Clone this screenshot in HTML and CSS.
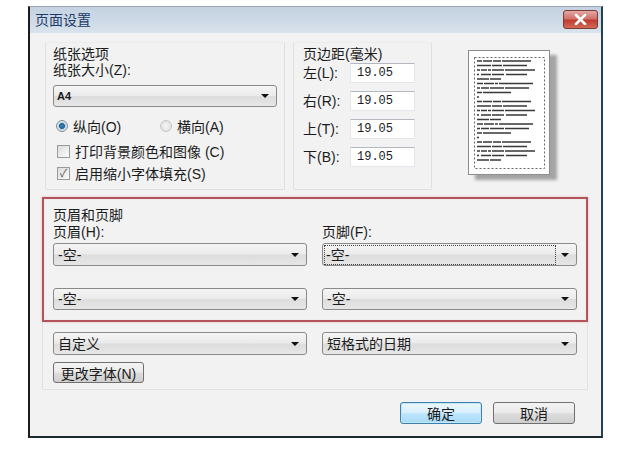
FILE: index.html
```html
<!DOCTYPE html>
<html>
  <head>
    <title>页面设置</title>
    <meta charset="utf-8" />
    <meta name="viewport" content="width=device-width, initial-scale=1" />
    <link rel="stylesheet" href="styles.css">
  </head>
  <body>
    <div class="dialog">
      <div class="titlebar">
        <span class="title">页面设置</span>
        <span class="close">
          <svg width="13" height="11" viewBox="0 0 13 11">
            <path d="M2 1 L11 10 M11 1 L2 10" stroke="#fff" stroke-width="2.6" stroke-linecap="round" />
          </svg>
        </span>
      </div>

      <div class="content">
        <div class="top">
          <div class="group paper">
            <div class="legend">纸张选项</div>
            <div class="label">纸张大小(Z):</div>
            <div class="combo a4"><span class="val">A4</span><i class="arrow"></i></div>
            <div class="radios">
              <span class="opt first"><span class="radio on"></span>纵向(O)</span>
              <span class="opt"><span class="radio"></span>横向(A)</span>
            </div>
            <div class="opt check-row one"><span class="check"></span>打印背景颜色和图像 (C)</div>
            <div class="opt check-row"><span class="check on">✓</span>启用缩小字体填充(S)</div>
          </div>

          <div class="group margins">
            <div class="legend">页边距(毫米)</div>
            <div class="mrow"><span class="mlabel">左(L):</span><span class="field">19.05</span></div>
            <div class="mrow"><span class="mlabel">右(R):</span><span class="field">19.05</span></div>
            <div class="mrow"><span class="mlabel">上(T):</span><span class="field">19.05</span></div>
            <div class="mrow"><span class="mlabel">下(B):</span><span class="field">19.05</span></div>
          </div>

          <div class="preview">
            <svg width="82" height="125" viewBox="0 0 82 125">
              <rect x="6.5" y="7.5" width="70" height="111" fill="none" stroke="#666" stroke-dasharray="2 2" />
              <g stroke="#383838" stroke-width="1.5">
                <line x1="9" y1="11" x2="63" y2="11" stroke-dasharray="5 1 9 1 8 1 60 10" />
                <line x1="9" y1="15.5" x2="59" y2="15.5" stroke-dasharray="14 1 10 1 60 10" />
                <line x1="9" y1="20" x2="67" y2="20" stroke-dasharray="3 1 6 1 3 1 12 1 60 10" />
                <line x1="9" y1="24.5" x2="59" y2="24.5" stroke-dasharray="2 2 10 1 12 2 60 10" />
                <line x1="9" y1="29" x2="33" y2="29" stroke-dasharray="12 1 60 10" />
                <line x1="9" y1="33.5" x2="65" y2="33.5" stroke-dasharray="6 1 10 1 3 1 60 10" />
                <line x1="9" y1="38" x2="61" y2="38" stroke-dasharray="3 1 8 1 14 1 60 10" />
                <line x1="9" y1="42.5" x2="43" y2="42.5" stroke-dasharray="5 1 60 10" />
                <line x1="9" y1="47" x2="11" y2="47" />
                <line x1="9" y1="51.5" x2="63" y2="51.5" stroke-dasharray="5 1 9 1 8 1 60 10" />
                <line x1="9" y1="56" x2="59" y2="56" stroke-dasharray="14 1 10 1 60 10" />
                <line x1="9" y1="60.5" x2="67" y2="60.5" stroke-dasharray="3 1 6 1 3 1 12 1 60 10" />
                <line x1="9" y1="65" x2="59" y2="65" stroke-dasharray="2 2 10 1 12 2 60 10" />
                <line x1="9" y1="69.5" x2="33" y2="69.5" stroke-dasharray="12 1 60 10" />
                <line x1="9" y1="74" x2="65" y2="74" stroke-dasharray="6 1 10 1 3 1 60 10" />
                <line x1="9" y1="78.5" x2="61" y2="78.5" stroke-dasharray="3 1 8 1 14 1 60 10" />
                <line x1="9" y1="83" x2="43" y2="83" stroke-dasharray="5 1 60 10" />
                <line x1="9" y1="87.5" x2="11" y2="87.5" />
                <line x1="9" y1="92" x2="63" y2="92" stroke-dasharray="5 1 9 1 8 1 60 10" />
                <line x1="9" y1="96.5" x2="59" y2="96.5" stroke-dasharray="14 1 10 1 60 10" />
                <line x1="9" y1="101" x2="67" y2="101" stroke-dasharray="3 1 6 1 3 1 12 1 60 10" />
                <line x1="9" y1="105.5" x2="59" y2="105.5" stroke-dasharray="2 2 10 1 12 2 60 10" />
                <line x1="9" y1="110" x2="33" y2="110" stroke-dasharray="12 1 60 10" />
              </g>
            </svg>
          </div>
        </div>

        <div class="hf-group">
          <div class="hf">
            <div class="legend wide">页眉和页脚</div>
            <div class="label">页眉(H):</div>
            <div class="label">页脚(F):</div>
            <div class="combo"><span class="val">-空-</span><i class="arrow"></i></div>
            <div class="combo"><span class="val focus">-空-</span><i class="arrow"></i></div>
            <div class="combo second"><span class="val">-空-</span><i class="arrow"></i></div>
            <div class="combo second"><span class="val">-空-</span><i class="arrow"></i></div>
          </div>
          <div class="hf-row">
            <div class="combo"><span class="val">自定义</span><i class="arrow"></i></div>
            <div class="combo"><span class="val">短格式的日期</span><i class="arrow"></i></div>
          </div>
          <span class="btn font">更改字体(N)</span>
        </div>

        <div class="actions">
          <span class="btn default">确定</span>
          <span class="btn">取消</span>
        </div>
      </div>
    </div>
  </body>
</html>
```

FILE: styles.css
```css
* {
  box-sizing: border-box;
}
html,
body {
  margin: 0;
  background: #fff;
  font-family: "Liberation Sans", "Noto Sans CJK SC", sans-serif;
  font-size: 14px;
  color: #1b1b1b;
}
body {
  padding: 6px 0 0 28px;
}

.dialog {
  width: 575px;
  height: 432px;
  background: #f2f2f2;
  border-top: 1px solid #9aa6b2;
  border-left: 2px solid #1c1c1c;
  border-right: 2px solid #24424f;
  border-bottom: 2px solid #1c2a30;
}

.titlebar {
  height: 26px;
  display: flex;
  justify-content: space-between;
  align-items: flex-start;
  padding-left: 5px;
  background: linear-gradient(to bottom, #c3d2e1, #cfdbe7 60%, #d9e3ed);
}
.title {
  line-height: 26px;
  color: #1d3a68;
}
.close {
  width: 35px;
  height: 19px;
  margin: 3px 3px 0 0;
  display: flex;
  align-items: center;
  justify-content: center;
  border: 1px solid #7a3a36;
  border-radius: 3px;
  background: linear-gradient(to bottom, #e4aaa3, #d0716a 45%, #bf3d30 55%, #d26a57);
}

.content {
  padding: 9px 0 0 12px;
}

/* top row */
.top {
  display: flex;
  align-items: flex-start;
  padding-left: 3px;
}
.group {
  border: 1px solid #e0e0e0;
  border-top-color: #ececec;
  border-radius: 2px;
}
.legend,
.label {
  line-height: 16px;
  white-space: nowrap;
}
.paper {
  width: 240px;
  height: 148px;
  padding: 3px 7px 0 7px;
}
.paper .combo {
  margin-top: 7px;
  height: 22px;
}
.combo.a4 .val {
  font-weight: bold;
  font-size: 11px;
  padding-left: 3px;
}
.radios {
  display: flex;
  margin-top: 9px;
  height: 20px;
  padding-left: 3px;
}
.opt {
  display: flex;
  align-items: center;
  gap: 5px;
  white-space: nowrap;
}
.opt.first {
  width: 104px;
}
.radio {
  width: 12px;
  height: 12px;
  border-radius: 50%;
  border: 1px solid #c6c6c6;
  background: radial-gradient(circle, #f4f4f4, #dcdcdc);
}
.radio.on {
  border-color: #7f8e99;
  background: radial-gradient(circle, #3f90c6 0, #1c5f8e 2.5px, #c7d5df 3.5px, #eef2f5 6px);
}
.check-row {
  height: 20px;
  padding-left: 4px;
  margin-top: 2px;
}
.check-row.one {
  margin-top: 5px;
}
.check {
  width: 13px;
  height: 13px;
  border: 1px solid #9a9a9a;
  background: linear-gradient(135deg, #dcdcdc, #fbfbfb);
  font-size: 11px;
  line-height: 11px;
  text-align: center;
  color: #555;
}

.margins {
  width: 139px;
  height: 148px;
  margin-left: 8px;
  padding: 3px 0 0 9px;
}
.mrow {
  display: flex;
  align-items: flex-start;
  height: 28px;
  padding-top: 1px;
}
.mlabel {
  width: 47px;
  line-height: 20px;
  white-space: nowrap;
}
.field {
  width: 65px;
  height: 20px;
  padding-left: 6px;
  background: #fff;
  border: 1px solid #e2e6ea;
  border-top-color: #b5b9bf;
  font-family: "Liberation Mono", monospace;
  font-size: 12px;
  line-height: 19px;
}

.preview {
  margin: 8px 0 0 36px;
  width: 82px;
  height: 125px;
  background: #fff;
  border: 1px solid #8c8c8c;
  box-shadow: 7px 5px 3px #a4a4a4;
}
.preview svg {
  display: block;
  margin: -1px;
}

/* header / footer */
.hf-group {
  width: 546px;
  margin-top: 7px;
  padding: 0 0 6px 0;
  border: 1px solid #e2e2e2;
  border-top: none;
}
.hf {
  margin: 0 -1px;
  display: grid;
  grid-template-columns: 254px 255px;
  column-gap: 15px;
  padding: 8px 8px 10px 9px;
  border: 2px solid #b3535c;
  box-shadow: 0 0 2px #e7b6b8, inset 0 0 1px #e7b6b8;
}
.legend.wide {
  grid-column: 1 / 3;
  line-height: 17px;
}
.hf .combo {
  margin-top: 3px;
  height: 23px;
}
.hf .combo.second {
  margin-top: 22px;
  height: 22px;
}
.hf-row {
  display: grid;
  grid-template-columns: 254px 255px;
  column-gap: 15px;
  margin: 10px 0 0 10px;
}
.hf-row .combo {
  height: 23px;
}

.combo {
  position: relative;
  display: flex;
  align-items: center;
  border: 1px solid #8a8a8a;
  border-radius: 3px;
  background: linear-gradient(to bottom, #f5f5f5, #ebebeb 48%, #dddddd 52%, #e6e6e6);
}
.val {
  padding-left: 4px;
  line-height: 18px;
  white-space: nowrap;
}
.val.focus {
  margin-left: 2px;
  padding-left: 1px;
  width: 230px;
  outline: 1px dotted #444;
}
.arrow {
  position: absolute;
  right: 7px;
  top: 50%;
  margin-top: -2px;
  border-left: 4px solid transparent;
  border-right: 4px solid transparent;
  border-top: 4px solid #111;
}

.btn {
  display: inline-flex;
  align-items: center;
  justify-content: center;
  width: 82px;
  height: 22px;
  border: 1px solid #707070;
  border-radius: 3px;
  background: linear-gradient(to bottom, #f3f3f3, #ebebeb 48%, #dddddd 52%, #cfcfcf);
  white-space: nowrap;
}
.btn.font {
  width: 91px;
  height: 21px;
  margin: 7px 0 0 10px;
}
.btn.default {
  border-color: #3c7fb1;
  background: linear-gradient(to bottom, #eaf6fd, #d9f0fc 48%, #bee6fd 52%, #a7d9f5);
  box-shadow: inset 0 0 0 1px #c5e6f6;
}

.actions {
  display: flex;
  justify-content: flex-end;
  gap: 11px;
  margin-top: 12px;
  padding-right: 26px;
}
```
